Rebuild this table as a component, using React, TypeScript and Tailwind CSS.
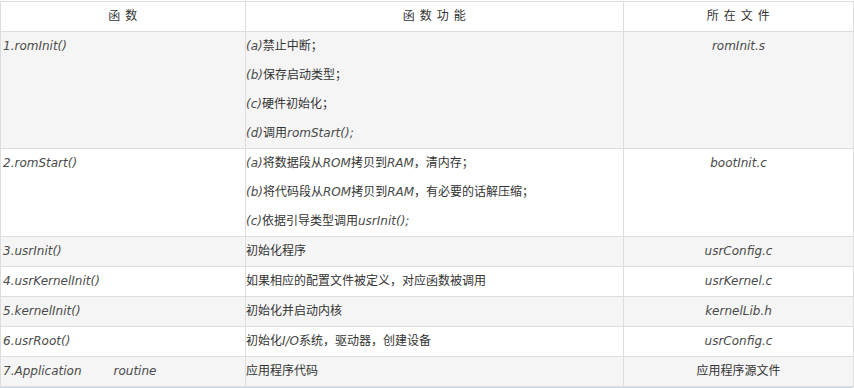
import React from "react";

type Part = { t: string; i?: boolean };

interface Row {
  fn: React.ReactNode;
  lines: Part[][];
  file: string;
  fileItalic: boolean;
}

const I = ({ children }: { children: React.ReactNode }) => (
  <span className="italic text-[#4a4a4a]">{children}</span>
);

const rows: Row[] = [
  {
    fn: "1.romInit()",
    lines: [
      [{ t: "(a)", i: true }, { t: "禁止中断；" }],
      [{ t: "(b)", i: true }, { t: "保存启动类型；" }],
      [{ t: "(c)", i: true }, { t: "硬件初始化；" }],
      [{ t: "(d)", i: true }, { t: "调用" }, { t: "romStart();", i: true }],
    ],
    file: "romInit.s",
    fileItalic: true,
  },
  {
    fn: "2.romStart()",
    lines: [
      [
        { t: "(a)", i: true },
        { t: "将数据段从" },
        { t: "ROM", i: true },
        { t: "拷贝到" },
        { t: "RAM", i: true },
        { t: "，清内存；" },
      ],
      [
        { t: "(b)", i: true },
        { t: "将代码段从" },
        { t: "ROM", i: true },
        { t: "拷贝到" },
        { t: "RAM", i: true },
        { t: "，有必要的话解压缩；" },
      ],
      [{ t: "(c)", i: true }, { t: "依据引导类型调用" }, { t: "usrInit();", i: true }],
    ],
    file: "bootInit.c",
    fileItalic: true,
  },
  { fn: "3.usrInit()", lines: [[{ t: "初始化程序" }]], file: "usrConfig.c", fileItalic: true },
  {
    fn: "4.usrKernelInit()",
    lines: [[{ t: "如果相应的配置文件被定义，对应函数被调用" }]],
    file: "usrKernel.c",
    fileItalic: true,
  },
  { fn: "5.kernelInit()", lines: [[{ t: "初始化并启动内核" }]], file: "kernelLib.h", fileItalic: true },
  {
    fn: "6.usrRoot()",
    lines: [[{ t: "初始化" }, { t: "I/O", i: true }, { t: "系统，驱动器，创建设备" }]],
    file: "usrConfig.c",
    fileItalic: true,
  },
  {
    fn: (
      <>
        7.Application<span className="ml-[32px]">routine</span>
      </>
    ),
    lines: [[{ t: "应用程序代码" }]],
    file: "应用程序源文件",
    fileItalic: false,
  },
];

export default function App() {
  return (
    <div
      className="w-[854px] h-[388px] bg-white pt-[1px] text-[12px] text-[#333]"
      style={{ fontFamily: '"DejaVu Sans", "Noto Sans CJK SC", sans-serif' }}
    >
      <table className="table-fixed border-collapse w-[853px] leading-[29px]">
        <colgroup>
          <col className="w-[245px]" />
          <col className="w-[378px]" />
          <col className="w-[230px]" />
        </colgroup>
        <thead>
          <tr className="bg-white">
            <th className="border border-[#dddddd] p-0 font-normal text-center tracking-[0.6px]">函 数</th>
            <th className="border border-[#dddddd] p-0 font-normal text-center tracking-[0.6px]">函 数 功 能</th>
            <th className="border border-[#dddddd] p-0 font-normal text-center tracking-[0.6px]">所 在 文 件</th>
          </tr>
        </thead>
        <tbody>
          {rows.map((r, idx) => (
            <tr key={idx} className={idx % 2 === 0 ? "bg-[#f5f5f5]" : "bg-white"}>
              <td className="border border-[#dddddd] p-0 pl-[2px] align-top whitespace-nowrap">
                <I>{r.fn}</I>
              </td>
              <td className="border border-[#dddddd] p-0 align-top whitespace-nowrap">
                {r.lines.map((line, li) => (
                  <div key={li}>
                    {line.map((p, pi) => (p.i ? <I key={pi}>{p.t}</I> : <span key={pi}>{p.t}</span>))}
                  </div>
                ))}
              </td>
              <td className="border border-[#dddddd] p-0 align-top text-center">
                {r.fileItalic ? <I>{r.file}</I> : r.file}
              </td>
            </tr>
          ))}
        </tbody>
      </table>
      <div className="w-[853px] h-[2px] bg-[#cdd9e4]" />
    </div>
  );
}
